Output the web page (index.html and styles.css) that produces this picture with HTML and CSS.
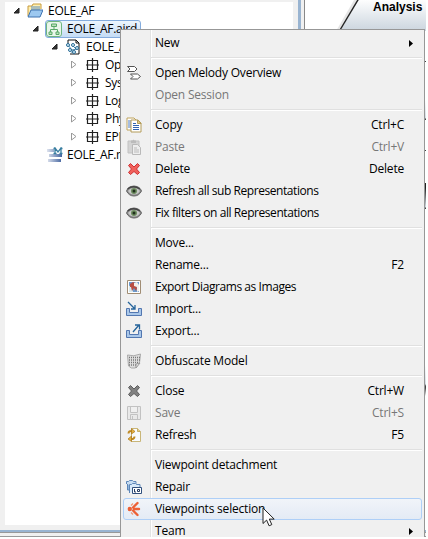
FILE: index.html
```
<!DOCTYPE html>
<html lang="en">
<head>
<meta charset="utf-8">
<title>Project explorer</title>
<link rel="stylesheet" href="styles.css">
</head>
<body>
<main class="app">
  <div class="workspace">
    <section class="explorer">
      <div class="tree">
        <div class="node"><svg class="arrow" viewBox="0 0 8 8"><path d="M6 1v5H1z" fill="#333" stroke="#222"/></svg><svg class="ico" viewBox="0 0 16 16"><path d="M1 13V3h4l1-2h8v5" fill="#fff0b0" stroke="#c79a3c"/><path d="M4 4h9M4 6h9" stroke="#5a8cc0"/><path d="M1 14l3-7h12l-3 7z" fill="#9cc8f0" stroke="#3e72b0"/></svg><span class="label">EOLE_AF</span></div>
        <div class="node l1"><svg class="arrow" viewBox="0 0 8 8"><path d="M6 1v5H1z" fill="#333" stroke="#222"/></svg><div class="picked"><svg class="ico" viewBox="0 0 16 16"><rect x=".5" y=".5" width="15" height="15" rx="2.5" fill="#e9f6ea" stroke="#6eb580"/><path d="M8 6v3M4.500 11V8.500h7V11" fill="none" stroke="#58a868"/><path d="M5.500 3h5v2.500h-5zM3 11h3v2.500H3zM10 11h3v2.500h-3z" fill="#b9e0b9" stroke="#58a868"/></svg><span class="label">EOLE_AF.aird</span></div></div>
        <div class="node l2"><svg class="arrow" viewBox="0 0 8 8"><path d="M6 1v5H1z" fill="#333" stroke="#222"/></svg><svg class="ico" viewBox="0 0 16 16"><path d="M3 5V1h8l3 3v11H5" fill="#fff" stroke="#111"/><path d="M11 1v3h3" fill="none" stroke="#111"/><path d="M3 6l4 5 5-1M7 11v3M7 6l4 4" fill="none" stroke="#4b86ac"/><g fill="#d7f0fb" stroke="#286a94"><circle cx="3" cy="6" r="1.500"/><circle cx="8" cy="6" r="1.500"/><circle cx="5" cy="11" r="1.500"/><circle cx="9" cy="13" r="1.500"/><circle cx="12" cy="9" r="1.500"/></g></svg><span class="label">EOLE_A</span></div>
        <div class="node l3"><svg class="arrow" viewBox="0 0 8 8"><path d="M1.500 0v7L6 3.500z" fill="#fff" stroke="#999"/></svg><svg class="ico" viewBox="0 0 16 16"><use href="#pkg"/></svg><span class="label">Op</span></div>
        <div class="node l3"><svg class="arrow" viewBox="0 0 8 8"><path d="M1.500 0v7L6 3.500z" fill="#fff" stroke="#999"/></svg><svg class="ico" viewBox="0 0 16 16"><use href="#pkg"/></svg><span class="label">Sys</span></div>
        <div class="node l3"><svg class="arrow" viewBox="0 0 8 8"><path d="M1.500 0v7L6 3.500z" fill="#fff" stroke="#999"/></svg><svg class="ico" viewBox="0 0 16 16"><use href="#pkg"/></svg><span class="label">Log</span></div>
        <div class="node l3"><svg class="arrow" viewBox="0 0 8 8"><path d="M1.500 0v7L6 3.500z" fill="#fff" stroke="#999"/></svg><svg class="ico" viewBox="0 0 16 16"><use href="#pkg"/></svg><span class="label">Phy</span></div>
        <div class="node l3"><svg class="arrow" viewBox="0 0 8 8"><path d="M1.500 0v7L6 3.500z" fill="#fff" stroke="#999"/></svg><svg class="ico" viewBox="0 0 16 16"><use href="#pkg"/></svg><span class="label">EPB</span></div>
        <div class="node model"><svg class="ico" viewBox="0 0 16 16"><defs><linearGradient id="bar"><stop stop-color="#dfe4ef"/><stop offset="1" stop-color="#43649f"/></linearGradient></defs><path d="M0 2h7v3H0zM2 7h13v3H2zM1 12h13v3H1z" fill="url(#bar)"/><path d="M8 7V1l3 4 3-4v6M6.500 1.500H9M13 1.500h2.500M6.500 6.500h3M12.500 6.500h3" fill="none" stroke="#387ea0" stroke-width="1.300"/></svg><span class="label">EOLE_AF.m</span></div>
      </div>
    </section>
    <section class="editor"><svg class="phase" width="121" height="31" viewBox="0 0 121 31"><defs><linearGradient id="ph" x2="0" y2="1"><stop stop-color="#fff"/><stop offset="1" stop-color="#cbd5de"/></linearGradient></defs><path d="M53-1L34 31h90V-1z" fill="url(#ph)"/><path d="M52-1L34 30" stroke="#ccc" stroke-width="4" opacity=".5"/><path d="M53.500-1L35 30" stroke="#222" stroke-width="1.400"/></svg><span class="phase-name">Analysis</span></section>
  </div>
  <footer class="status"></footer>

  <nav class="menu">
    <div class="item"><span class="slot"></span><span class="text">New</span><svg class="sub" viewBox="0 0 4 7"><path d="M0 0v7l4-3.500z"/></svg></div>
    <hr>
    <div class="item"><span class="slot"><svg class="ico" viewBox="0 0 16 16"><path d="M1.500 1.500h7L11 4 8.500 6.500h-7L4 4zM4.500 9h7l3 2.500-3 2.500h-7L7 11.500z" fill="#fff" stroke="#555"/></svg></span><span class="text">Open Melody Overview</span></div>
    <div class="item off"><span class="slot"></span><span class="text">Open Session</span></div>
    <hr>
    <div class="item"><span class="slot"><svg class="ico" viewBox="0 0 16 16"><path d="M1 1h7l3 3v9H1z" fill="#fff" stroke="#c0a45c"/><path d="M2 4h3M2 6h3M2 8h3M2 10h3" stroke="#4d7bc0"/><path d="M5 3h7l3 3v9H5z" fill="#fff" stroke="#b39b58"/><path d="M11.500 3v3.500H15z" fill="#ead08b" stroke="#b39b58"/><path d="M7 6.500h3M7 8.500h6M7 10.500h6M7 12.500h6" stroke="#3264b0"/></svg></span><span class="text">Copy</span><kbd>Ctrl+C</kbd></div>
    <div class="item off"><span class="slot"><svg class="ico" viewBox="0 0 16 16"><path d="M2 2h11v12H2z" fill="#d4d4d4" stroke="#c2c2c2"/><path d="M5 3V1.500h1.500l1-1 1 1H10V4H5z" fill="#bbb"/><path d="M6.500 5.500h5l3 3v7h-8z" fill="#eee" stroke="#b9b9b9"/><path d="M8 9h3M8 11h5M8 13h5" stroke="#bbb"/></svg></span><span class="text">Paste</span><kbd>Ctrl+V</kbd></div>
    <div class="item"><span class="slot"><svg class="ico" viewBox="0 0 16 16"><use href="#cross" fill="#f0605a" stroke="#cf3033"/></svg></span><span class="text">Delete</span><kbd>Delete</kbd></div>
    <div class="item tight"><span class="slot"><svg class="ico" viewBox="0 0 16 16"><use href="#eye"/></svg></span><span class="text">Refresh all sub Representations</span></div>
    <div class="item tight"><span class="slot"><svg class="ico" viewBox="0 0 16 16"><use href="#eye"/></svg></span><span class="text">Fix filters on all Representations</span></div>
    <hr>
    <div class="item"><span class="slot"></span><span class="text">Move...</span></div>
    <div class="item"><span class="slot"></span><span class="text">Rename...</span><kbd>F2</kbd></div>
    <div class="item tight"><span class="slot"><svg class="ico" viewBox="0 0 16 16"><path d="M1.500 1.500h13v13h-13z" fill="#fff" stroke="#a08d74"/><path d="M3 3h10v10H3z" fill="#6c9acc"/><path d="M3 7l3-1 1 7H3z" fill="#d9e8ec"/><path d="M4 5l3-2 2 1v2l2 3-1 3-2-3-2 3-1-4H4z" fill="#b94e43"/><path d="M8 4l3-1 2 3v6l-2 1 0-5-3-1z" fill="#f4efe8"/></svg></span><span class="text">Export Diagrams as Images</span></div>
    <div class="item"><span class="slot"><svg class="ico" viewBox="0 0 16 16"><use href="#tray"/><path d="M2 1l7 7M9 4v4H5" fill="none" stroke="#24639a" stroke-width="1.300"/></svg></span><span class="text">Import...</span></div>
    <div class="item"><span class="slot"><svg class="ico" viewBox="0 0 16 16"><use href="#tray"/><path d="M7 9l6-7M9 2h4.500v4.500" fill="none" stroke="#24639a" stroke-width="1.300"/></svg></span><span class="text">Export...</span></div>
    <hr>
    <div class="item"><span class="slot"><svg class="ico" viewBox="0 0 16 16"><path d="M1.500 2q6 2 13-1l-1 9-4 5q-5 1-7-2z" fill="#ddd" stroke="#aaa"/><path d="M3 4.500h11M3 7h11M3 9.500h10M3 12h8" stroke="#777" stroke-width="1.600" stroke-dasharray="1 1"/><path d="M10 15v-4l4-1z" fill="#e8e8e8" stroke="#999"/></svg></span><span class="text">Obfuscate Model</span></div>
    <hr>
    <div class="item"><span class="slot"><svg class="ico" viewBox="0 0 16 16"><use href="#cross" fill="#808080" stroke="#5c5c5c"/></svg></span><span class="text">Close</span><kbd>Ctrl+W</kbd></div>
    <div class="item off"><span class="slot"><svg class="ico" viewBox="0 0 16 16"><path d="M1.500 1.500h13v13h-13zM4.500 1.500v6h7v-6M4.500 14v-4.500h7V14M6.500 11v3" fill="#e9e9e9" stroke="#c2c2c2"/></svg></span><span class="text">Save</span><kbd>Ctrl+S</kbd></div>
    <div class="item"><span class="slot"><svg class="ico" viewBox="0 0 16 16"><path d="M5.500 1.500h6l3 3v10h-9z" fill="#f8fbff" stroke="#c9b679"/><path d="M11.500 1.500v3h3" fill="#e5cf86" stroke="#c3ad69"/><path d="M2.500 6.500q0-3 4-2.500M8.500 9.500q0 3-4 2.500" fill="none" stroke="#be8925" stroke-width="2"/><path d="M5.500 1.500L9 4.500 5.500 7zM5.500 9v5.500L2 12z" fill="#e5b040" stroke="#a9771c" stroke-width=".7"/></svg></span><span class="text">Refresh</span><kbd>F5</kbd></div>
    <hr>
    <div class="item"><span class="slot"></span><span class="text">Viewpoint detachment</span></div>
    <div class="item"><span class="slot"><svg class="ico" viewBox="0 0 16 16"><path d="M.5 5V2.500h2l1-1h3l1 1H10V7" fill="#c6dcf2" stroke="#5d86b8"/><path d="M1.500 5v6H5V7" fill="#8fb5dc" stroke="#5d86b8"/><path d="M3.500 14V5.500h2l1-1h3l1 1H14V9" fill="#d8e9f9" stroke="#5d86b8"/><path d="M6.500 8.500h9v6h-9z" fill="#fff" stroke="#31507e"/><path d="M8.500 10v3H10M11.500 10.500h2v2h-2z" fill="none" stroke="#223a60"/></svg></span><span class="text">Repair</span></div>
    <div class="item hot"><span class="slot"><svg class="ico" viewBox="0 0 16 16"><path d="M7 6.500L11.500 2M8 8h5M7 9.500l4.500 4.500" stroke="#ed6036" stroke-width="2.400" stroke-linecap="round"/><circle cx="3.800" cy="8" r="2.200" fill="#ed6036"/><path d="M5 4.500L7 2.500M5 11.500l2 2" stroke="#f29672" stroke-width="1.200"/></svg></span><span class="text">Viewpoints selection</span></div>
    <div class="item"><span class="slot"></span><span class="text">Team</span><svg class="sub" viewBox="0 0 4 7"><path d="M0 0v7l4-3.500z"/></svg></div>
  </nav>
  <svg class="cursor" width="13" height="20" viewBox="0 0 13 20"><path d="M1 1v15.500l3.600-3.400 2.500 5.700 2.700-1.200-2.500-5.500h4.900z" fill="#fff" stroke="#222"/></svg>
</main>
<svg class="symbols" width="0" height="0">
  <g id="pkg"><path d="M3.500 3.500h10v9h-10zM8.500 1v14M2 8h13" fill="none" stroke="#222" stroke-width="1.200"/></g>
  <g id="cross"><path d="M4.500 2.500L8 6l3.500-3.500 2 2L10.500 8l3 3.500-2 2L8 10.500l-3.500 3-2-2L5.500 8l-3-3.500z"/></g>
  <g id="eye"><path d="M.5 8Q2 3.500 8 3q6 .5 7.500 5Q13 13 8 13T.5 8z" fill="#8a8a8a" stroke="#666"/><path d="M2 8q2-3 6-3t6 3q-2 3.500-6 3.500T2 8z" fill="#c8c8c8"/><circle cx="8" cy="8" r="3" fill="#6c8c5e"/><circle cx="8" cy="8" r="1.500" fill="#20301d"/><path d="M1.500 6Q7 1.500 14 6" fill="none" stroke="#444" stroke-width="1.300"/></g>
  <g id="tray"><path d="M.5 7.500h3v4h9v-4h3v7H.5z" fill="#a9c7e9" stroke="#5277b0"/></g>
</svg>
</body>
</html>
```
FILE: styles.css
```
* { box-sizing: border-box; }
body { margin: 0; background: #fff; font: 12px/18px "Open Sans", "Noto Sans", sans-serif; color: #000; }
.app { position: relative; width: 426px; height: 537px; overflow: hidden; background: #f0f0f0; display: flex; flex-direction: column; }
.workspace { display: flex; height: 530px; }
.explorer { width: 301px; padding: 2px 5px 5px; border-right: 3px solid #99b4d1; flex: none; }
.tree { height: 523px; width: 288px; background: #fff; overflow: hidden; }
.node { display: flex; align-items: center; height: 18px; padding-left: 8px; white-space: nowrap; }
.l1 { padding-left: 27px; }
.l2 { padding-left: 46px; }
.l3 { padding-left: 65px; }
.model { padding-left: 42px; }
.arrow { width: 8px; height: 8px; margin-right: 6px; flex: none; }
.ico { width: 16px; height: 16px; display: block; flex: none; }
.label { margin-left: 5px; letter-spacing: -.25px; }
.model .label { margin-left: 4px; }
.picked { display: flex; align-items: center; height: 18px; padding: 0 3px; margin-left: -1px; border: 1px solid #84acdd; border-radius: 3px; background: linear-gradient(#edf5fd, #c5dcf5); }
.picked .ico { margin-left: -3px; }
.editor { position: relative; flex: 1; margin-left: 3px; border-left: 1px solid #888; background: linear-gradient(#fff 61px, #444 61px 62px, #fff 62px 100px, #d5dde4 118px, #444 119px 120px, #fff 120px 150px, #444 150px 151px, #fff 151px 183px, #222 183px 188px, #d5dde4 207px, #444 208px 209px, #fff 209px 365px, #d5dde4 384px, #444 386px 388px, #fff 396px); }
.phase { display: block; }
.phase-name { position: absolute; left: 68px; top: -2px; font: bold 12px/18px "Liberation Sans", sans-serif; }
.status { height: 7px; background: #f0f0f0; border-top: 2px solid #99b4d1; border-bottom: 1px solid #999; box-shadow: inset 0 1px #999; }
.menu { position: absolute; left: 120px; top: 29px; width: 305px; height: 520px; padding: 2px 2px 0; border: 1px solid #979797; background: linear-gradient(90deg, #f0f0f0 29px, #e2e3e3 29px 30px, #fff 30px 31px, #f0f0f0 31px); }
.item { display: flex; align-items: center; height: 22px; padding-right: 17px; border: 1px solid transparent; border-radius: 3px; letter-spacing: -.2px; line-height: 16px; white-space: nowrap; }
.tight { letter-spacing: -.43px; }
.slot { width: 31px; padding-left: 2px; flex: none; }
.text { flex: 1; }
kbd { font: inherit; }
.off { color: #777; }
.hot { border-color: #aecff7; background: linear-gradient(#f1f4f9, #e4ebf5); }
.sub { width: 4px; height: 7px; margin-right: -9px; }
hr { height: 2px; margin: 3px 0 3px 28px; border: 0; border-top: 1px solid #e0e0e0; border-bottom: 1px solid #fff; }
.cursor { position: absolute; left: 262px; top: 507px; }
.symbols { position: absolute; }
```
